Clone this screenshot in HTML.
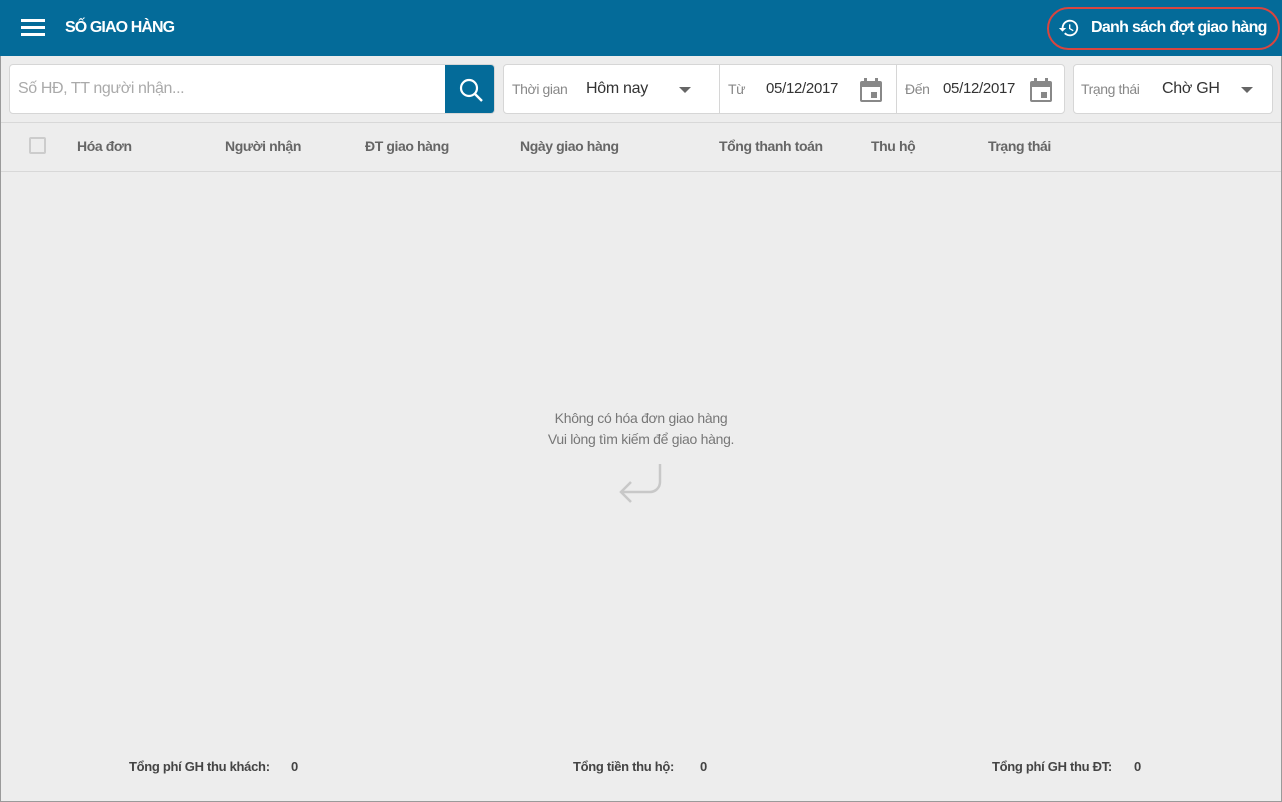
<!DOCTYPE html>
<html><head><meta charset="utf-8"><style>
*{margin:0;padding:0;box-sizing:border-box}
body{width:1282px;height:802px;overflow:hidden;background:#ededed;font-family:"Liberation Sans",sans-serif;position:relative;border:1px solid #9a9a9a;white-space:nowrap}
.hdr{position:absolute;left:-1px;top:-1px;width:1282px;height:56px;background:#046b99;color:#fff}
.abs{position:absolute}
.box{position:absolute;background:#fff;border:1px solid #d6d6d6;border-radius:4px;top:63px;height:50px}
.lbl{position:absolute;font-size:14px;color:#888;top:16px;letter-spacing:-0.4px}
.val{position:absolute;font-size:16px;color:#333;top:15px;letter-spacing:-0.3px}
.th{position:absolute;top:137px;font-size:14px;font-weight:bold;color:#666;letter-spacing:-0.4px}
.ft{position:absolute;top:758px;font-size:13px;font-weight:bold;color:#444;letter-spacing:-0.3px}
.cal{position:absolute;top:12px;width:24px;height:26px}
.tri{position:absolute;width:0;height:0;border-left:6px solid transparent;border-right:6px solid transparent;border-top:6px solid #666}
</style></head><body>
<div class="hdr">
 <div class="abs" style="left:21px;top:19px;width:24px;height:3px;background:#fff"></div>
 <div class="abs" style="left:21px;top:26px;width:24px;height:3px;background:#fff"></div>
 <div class="abs" style="left:21px;top:33px;width:24px;height:3px;background:#fff"></div>
 <div class="abs" style="left:65px;top:19px;font-size:16px;font-weight:bold;letter-spacing:-0.9px">SỐ GIAO HÀNG</div>
 <div class="abs" style="left:1047px;top:7px;width:233px;height:43px;border:2px solid #d9453f;border-radius:22px"></div>
 <svg class="abs" style="left:1058px;top:17px" width="22" height="22" viewBox="0 0 24 24"><path fill="#fff" d="M13 3a9 9 0 0 0-9 9H1l3.9 3.9L9 12H6a7 7 0 1 1 2.05 4.95l-1.42 1.42A9 9 0 1 0 13 3zm-1 5v5l4.28 2.54.72-1.21-3.5-2.08V8H12z"/></svg>
 <div class="abs" style="left:1091px;top:19px;font-size:16px;font-weight:bold;letter-spacing:-0.7px">Danh sách đợt giao hàng</div>
</div>
<div class="box" style="left:8px;width:486px;overflow:hidden">
 <div class="abs" style="left:8px;top:15px;font-size:16px;color:#aaa;letter-spacing:-0.4px">Số HĐ, TT người nhận...</div>
 <div class="abs" style="left:435px;top:0;width:50px;height:50px;background:#046b99"></div>
 <svg class="abs" style="left:448px;top:12px" width="26" height="26" viewBox="0 0 26 26"><circle cx="11" cy="11" r="8" fill="none" stroke="#fff" stroke-width="2.2"/><line x1="17" y1="17" x2="24" y2="24" stroke="#fff" stroke-width="2.4"/></svg>
</div>
<div class="box" style="left:502px;width:562px">
 <div class="lbl" style="left:8px">Thời gian</div><div class="val" style="left:82px">Hôm nay</div>
 <div class="tri" style="left:175px;top:22px"></div>
 <div class="abs" style="left:215px;top:0;width:1px;height:48px;background:#d6d6d6"></div>
 <div class="lbl" style="left:224px">Từ</div><div class="val" style="left:262px;font-size:15px">05/12/2017</div>
 <svg class="cal" style="left:355px" viewBox="0 0 24 26"><rect x="1" y="4" width="22" height="21" rx="2" fill="#888"/><rect x="3" y="10" width="18" height="13" fill="#fff"/><rect x="5" y="1" width="3" height="5" fill="#888"/><rect x="16" y="1" width="3" height="5" fill="#888"/><rect x="12" y="15" width="6" height="6" fill="#888"/></svg>
 <div class="abs" style="left:392px;top:0;width:1px;height:48px;background:#d6d6d6"></div>
 <div class="lbl" style="left:401px">Đến</div><div class="val" style="left:439px;font-size:15px">05/12/2017</div>
 <svg class="cal" style="left:525px" viewBox="0 0 24 26"><rect x="1" y="4" width="22" height="21" rx="2" fill="#888"/><rect x="3" y="10" width="18" height="13" fill="#fff"/><rect x="5" y="1" width="3" height="5" fill="#888"/><rect x="16" y="1" width="3" height="5" fill="#888"/><rect x="12" y="15" width="6" height="6" fill="#888"/></svg>
</div>
<div class="box" style="left:1072px;width:200px">
 <div class="lbl" style="left:7px">Trạng thái</div><div class="val" style="left:88px">Chờ GH</div>
 <div class="tri" style="left:167px;top:22px"></div>
</div>
<div class="abs" style="left:0;top:121px;width:1280px;height:1px;background:#d8d8d8"></div>
<div class="abs" style="left:28px;top:136px;width:17px;height:17px;border:2px solid #ccc;border-radius:2px"></div>
<div class="th" style="left:76px">Hóa đơn</div>
<div class="th" style="left:224px">Người nhận</div>
<div class="th" style="left:364px">ĐT giao hàng</div>
<div class="th" style="left:519px">Ngày giao hàng</div>
<div class="th" style="left:718px">Tổng thanh toán</div>
<div class="th" style="left:870px">Thu hộ</div>
<div class="th" style="left:987px">Trạng thái</div>
<div class="abs" style="left:0;top:170px;width:1280px;height:1px;background:#d8d8d8"></div>
<div class="abs" style="left:-1px;top:407px;width:1282px;text-align:center;font-size:14px;color:#777;line-height:21px;letter-spacing:-0.3px">Không có hóa đơn giao hàng<br>Vui lòng tìm kiếm để giao hàng.</div>
<svg class="abs" style="left:615px;top:461px" width="48" height="46" viewBox="0 0 48 46"><path d="M44 2v18a10 10 0 0 1-10 10H5M15 20L5 30l10 10" fill="none" stroke="#c8c8c8" stroke-width="2.5"/></svg>
<div class="ft" style="left:128px">Tổng phí GH thu khách:</div><div class="ft" style="left:290px">0</div>
<div class="ft" style="left:572px">Tổng tiền thu hộ:</div><div class="ft" style="left:699px">0</div>
<div class="ft" style="left:991px">Tổng phí GH thu ĐT:</div><div class="ft" style="left:1133px">0</div>
</body></html>
